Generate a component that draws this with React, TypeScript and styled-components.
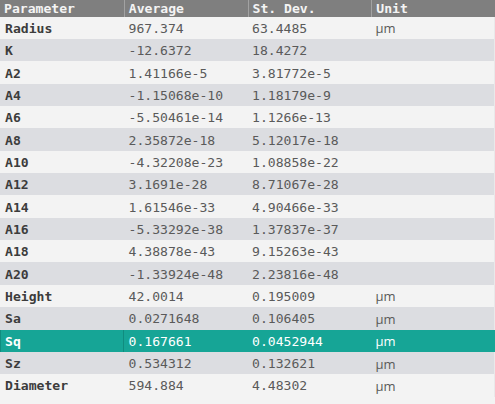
import React from "react";
import styled, { createGlobalStyle } from "styled-components";

const Global = createGlobalStyle`
  html, body { margin: 0; padding: 0; background: #f3f3f3; }
  #root { width: 495px; height: 404px; overflow: hidden; }
`;

const Table = styled.div`
  width: 495px;
  display: flex;
  flex-direction: column;
  font-family: "DejaVu Sans Mono", "Liberation Mono", monospace;
  font-size: 13.1px;
`;

const HeaderRow = styled.div`
  display: grid;
  grid-template-columns: repeat(4, 1fr);
  height: 16.7px;
  background: #7f7f7f;
`;

const HeaderCell = styled.div`
  display: flex;
  align-items: center;
  padding-left: 4px;
  color: #f4f4f4;
  font-weight: bold;
  border-left: 1px solid #a2a2a2;
  &:first-child { border-left: none; }
  white-space: nowrap;
`;

const Row = styled.div<{ $alt: boolean; $sel: boolean }>`
  display: grid;
  grid-template-columns: repeat(4, 1fr);
  height: 22.35px;
  background: ${(p) => (p.$sel ? "#16a596" : p.$alt ? "#dcdde1" : "#f3f3f3")};
  border-right: 1px solid ${(p) => (p.$sel ? "#16a596" : "#e9e9ea")};
  box-sizing: border-box;
`;

const Cell = styled.div<{ $sel: boolean; $name?: boolean; $focus?: boolean }>`
  display: flex;
  align-items: center;
  padding-left: 4px;
  padding-top: 1px;
  box-sizing: border-box;
  white-space: nowrap;
  color: ${(p) => (p.$sel ? "#ffffff" : p.$name ? "#3c3c3c" : "#5a5a5a")};
  font-weight: ${(p) => (p.$name ? "bold" : "normal")};
  border: 1px solid ${(p) => (p.$focus ? "#108c7f" : "transparent")};
  border-top: none;
  border-bottom: none;
`;

const UnitCell = styled(Cell)`
  font-family: "Open Sans", "Noto Sans", sans-serif;
  font-size: 13px;
  font-weight: normal;
`;

type R = [string, string, string, string];
const rows: R[] = [
  ["Radius", "967.374", "63.4485", "µm"],
  ["K", "-12.6372", "18.4272", ""],
  ["A2", "1.41166e-5", "3.81772e-5", ""],
  ["A4", "-1.15068e-10", "1.18179e-9", ""],
  ["A6", "-5.50461e-14", "1.1266e-13", ""],
  ["A8", "2.35872e-18", "5.12017e-18", ""],
  ["A10", "-4.32208e-23", "1.08858e-22", ""],
  ["A12", "3.1691e-28", "8.71067e-28", ""],
  ["A14", "1.61546e-33", "4.90466e-33", ""],
  ["A16", "-5.33292e-38", "1.37837e-37", ""],
  ["A18", "4.38878e-43", "9.15263e-43", ""],
  ["A20", "-1.33924e-48", "2.23816e-48", ""],
  ["Height", "42.0014", "0.195009", "µm"],
  ["Sa", "0.0271648", "0.106405", "µm"],
  ["Sq", "0.167661", "0.0452944", "µm"],
  ["Sz", "0.534312", "0.132621", "µm"],
  ["Diameter", "594.884", "4.48302", "µm"],
];

export default function App() {
  return (
    <>
      <Global />
      <Table>
        <HeaderRow>
          <HeaderCell>Parameter</HeaderCell>
          <HeaderCell>Average</HeaderCell>
          <HeaderCell>St. Dev.</HeaderCell>
          <HeaderCell>Unit</HeaderCell>
        </HeaderRow>
        {rows.map((r, i) => {
          const sel = r[0] === "Sq";
          return (
            <Row key={r[0]} $alt={i % 2 === 1} $sel={sel}>
              <Cell $sel={sel} $name $focus={sel}>{r[0]}</Cell>
              <Cell $sel={sel}>{r[1]}</Cell>
              <Cell $sel={sel}>{r[2]}</Cell>
              <UnitCell $sel={sel}>{r[3]}</UnitCell>
            </Row>
          );
        })}
      </Table>
    </>
  );
}
